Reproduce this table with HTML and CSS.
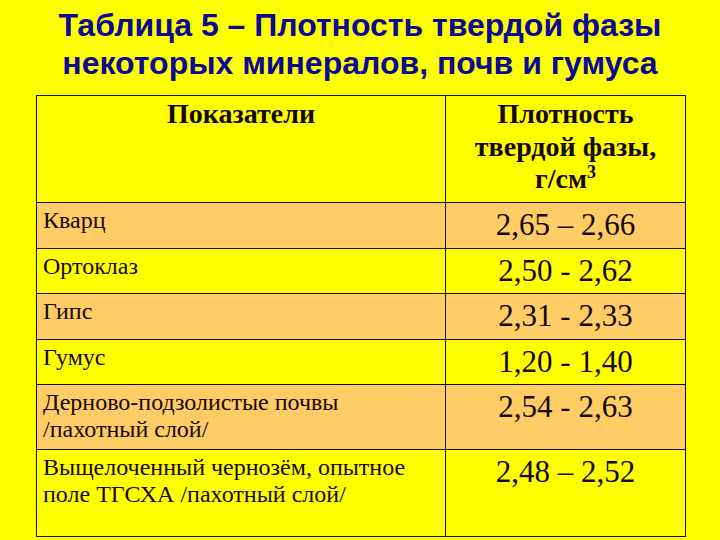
FILE: index.html
```html
<!DOCTYPE html>
<html lang="ru">
<head>
<meta charset="utf-8">
<title>Таблица 5</title>
<link rel="stylesheet" href="styles.css">
</head>
<body>
<div class="slide">
  <h1 class="title">Таблица 5 – Плотность твердой фазы<br>некоторых минералов, почв и гумуса</h1>
  <table class="data">
    <colgroup><col class="c-name"><col class="c-val"></colgroup>
    <thead>
      <tr class="head">
        <th class="h-name">Показатели</th>
        <th class="h-val">Плотность<br>твердой фазы,<br>г/см<sup>3</sup></th>
      </tr>
    </thead>
    <tbody>
      <tr class="orange"><td class="name">Кварц</td><td class="val">2,65 – 2,66</td></tr>
      <tr class="yellow"><td class="name">Ортоклаз</td><td class="val">2,50 - 2,62</td></tr>
      <tr class="orange"><td class="name">Гипс</td><td class="val">2,31 - 2,33</td></tr>
      <tr class="yellow"><td class="name">Гумус</td><td class="val">1,20 - 1,40</td></tr>
      <tr class="orange"><td class="name">Дерново-подзолистые почвы<br>/пахотный слой/</td><td class="val">2,54 - 2,63</td></tr>
      <tr class="yellow last"><td class="name">Выщелоченный чернозём, опытное<br>поле ТГСХА /пахотный слой/</td><td class="val">2,48 – 2,52</td></tr>
    </tbody>
  </table>
</div>
</body>
</html>
```

FILE: styles.css
```css
html, body {
  margin: 0;
  padding: 0;
  background: #ffff00;
}
.slide {
  width: 720px;
  height: 540px;
  padding: 6px 0 0 36px;
  box-sizing: border-box;
  overflow: hidden;
}
.title {
  margin: 0 36px 0 0;
  font-family: "Liberation Sans", Arial, sans-serif;
  font-weight: bold;
  font-size: 32px;
  line-height: 38px;
  color: #0a0a96;
  text-align: center;
  height: 89px;
}
.data {
  border-collapse: collapse;
  width: 649px;
  table-layout: fixed;
  color: #150800;
}
.data th, .data td {
  font-family: "Liberation Serif", "Tinos", "DejaVu Serif", "Times New Roman", serif;
  border: 1px solid #111;
  padding: 0;
  vertical-align: top;
}
.c-name { width: 409px; }
.c-val { width: 240px; }
.head th {
  background: #ffff00;
  font-weight: bold;
  font-size: 28px;
  line-height: 32.5px;
  padding: 2px 0 6px;
  text-align: center;
  height: 98px;
}
.head sup {
  font-size: 18px;
  line-height: 0;
  vertical-align: 10px;
}
.orange td { background: #ffcc66; }
.yellow td { background: #ffff00; }
.data td.name {
  font-size: 24px;
  line-height: 27px;
  padding: 4px 6px 6px;
  text-align: left;
}
.data td.val {
  font-size: 31px;
  line-height: 35.5px;
  padding: 4px 0 5px;
  text-align: center;
}
.last td { height: 76px; }
```
